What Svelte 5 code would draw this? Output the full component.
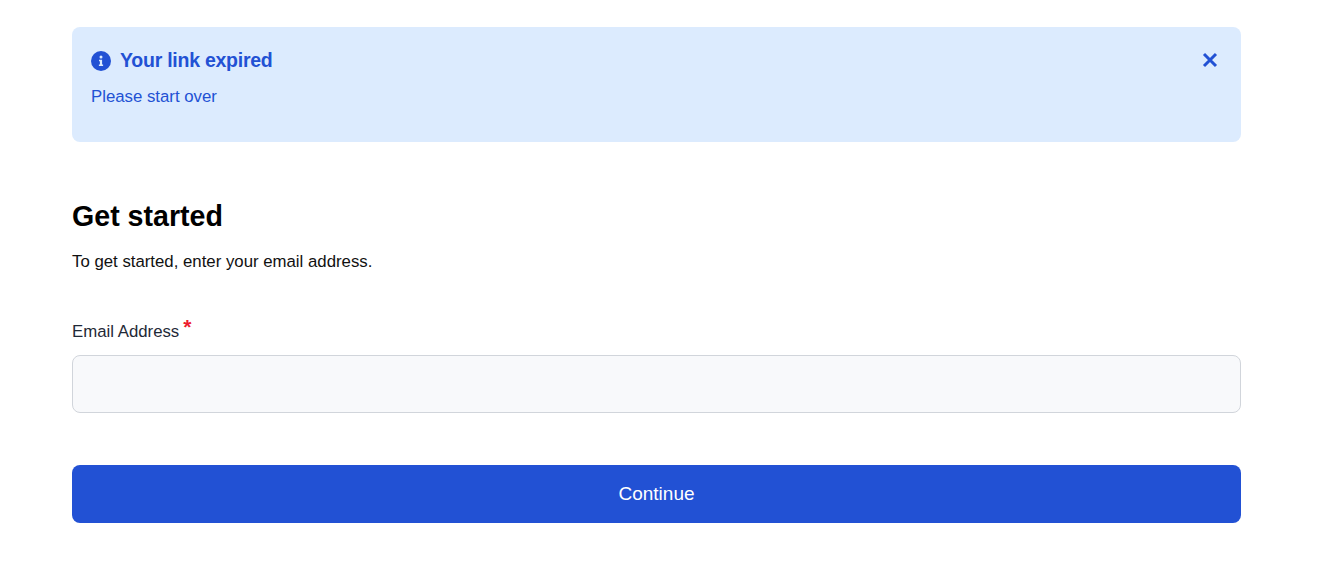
<script>
  let email = "";
</script>

<main class="page">
  <div class="alert" role="alert">
    <div class="alert-head">
      <svg class="info" viewBox="0 0 20 20" aria-hidden="true">
        <circle cx="10" cy="10" r="10" fill="#2251d4" />
        <circle cx="10" cy="6" r="1.5" fill="#dcebfe" />
        <path d="M8 8.8h3.1v4.6h1v1.5H7.9v-1.5h1v-3.1h-.9z" fill="#dcebfe" />
      </svg>
      <h2>Your link expired</h2>
      <button class="close" aria-label="Close">
        <svg viewBox="0 0 16 16" aria-hidden="true">
          <path d="M2 2l12 12M14 2L2 14" stroke="#2251d4" stroke-width="3" fill="none" />
        </svg>
      </button>
    </div>
    <p>Please start over</p>
  </div>

  <h1>Get started</h1>
  <p class="intro">To get started, enter your email address.</p>

  <label for="email">Email Address<span class="req">*</span></label>
  <input id="email" type="email" bind:value={email} />

  <button class="submit">Continue</button>
</main>

<style>
  :global(body) {
    margin: 0;
    background: #fff;
  }

  .page {
    display: flex;
    flex-direction: column;
    padding: 27px 80px 0 72px;
    font-family: "Liberation Sans", Arial, sans-serif;
  }

  .alert {
    height: 115px;
    box-sizing: border-box;
    padding: 20px 19px 0;
    background: #dcebfe;
    border-radius: 8px;
    color: #2251d4;
  }

  .alert-head {
    display: flex;
    align-items: center;
    height: 26px;
  }

  .info {
    width: 20px;
    height: 20px;
    margin-top: 1px;
    margin-right: 9px;
  }

  h2 {
    flex: 1;
    margin: 0;
    font-size: 19.5px;
    letter-spacing: -0.25px;
    line-height: 26px;
    font-weight: 700;
  }

  .close {
    display: flex;
    width: 16px;
    height: 16px;
    margin-right: 4px;
    padding: 0;
    border: 0;
    background: none;
  }

  .alert p {
    margin: 13px 0 0;
    font-size: 16.8px;
    line-height: 22px;
  }

  h1 {
    margin: 56px 0 0;
    font-size: 28.6px;
    line-height: 36px;
    font-weight: 700;
    color: #000;
  }

  .intro {
    margin: 17px 0 0;
    font-size: 16.8px;
    line-height: 22px;
    color: #111;
  }

  label {
    margin-top: 46px;
    font-size: 16.8px;
    line-height: 24px;
    color: #1f2937;
  }

  .req {
    position: relative;
    top: -3px;
    margin-left: 4px;
    font-size: 21px;
    font-weight: 700;
    line-height: 1;
    color: #ed1c2e;
  }

  input {
    box-sizing: border-box;
    height: 58px;
    margin-top: 11px;
    border: 1.5px solid #d1d5db;
    border-radius: 8px;
    background: #f8f9fb;
  }

  .submit {
    height: 58px;
    margin-top: 52px;
    border: 0;
    border-radius: 8px;
    background: #2251d4;
    color: #fff;
    font-family: inherit;
    font-size: 19px;
  }
</style>
